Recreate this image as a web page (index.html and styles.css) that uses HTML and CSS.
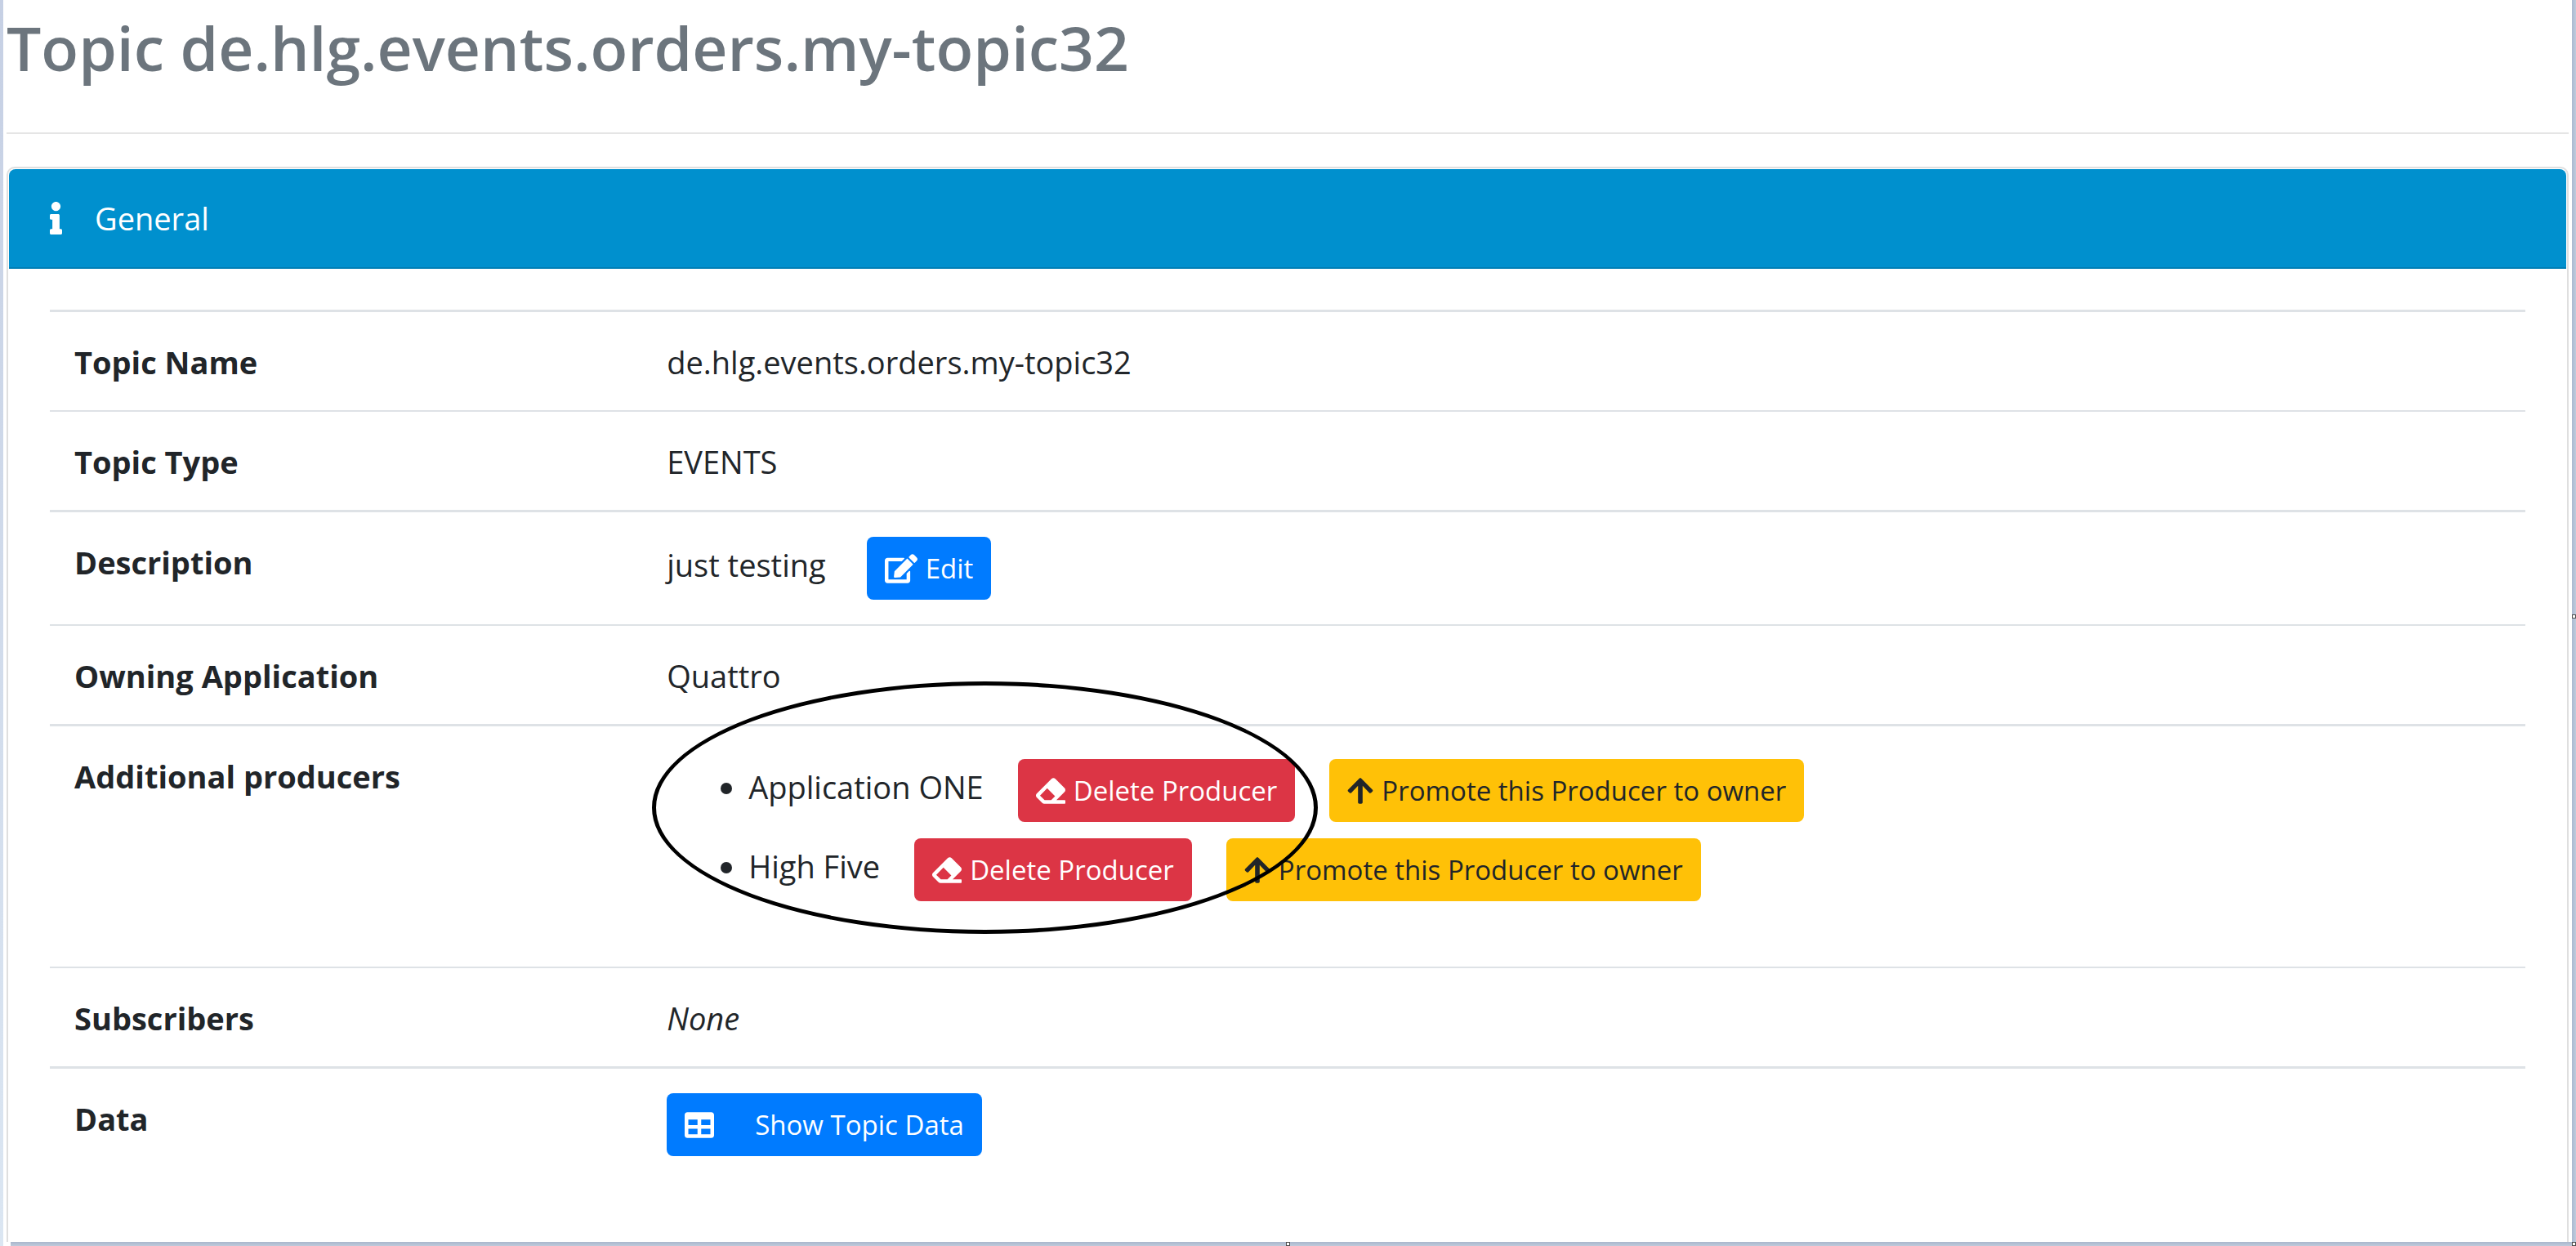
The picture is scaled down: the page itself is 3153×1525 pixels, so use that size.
FILE: index.html
```html
<!DOCTYPE html>
<html lang="en">
<head>
<meta charset="utf-8">
<title>Topic de.hlg.events.orders.my-topic32</title>
<link rel="stylesheet" href="styles.css">
</head>
<body>
<svg class="sprite" aria-hidden="true">
  <symbol id="eraser" viewBox="0 0 512 512"><path d="M497.941 273.941c18.745-18.745 18.745-49.137 0-67.882l-160-160c-18.745-18.745-49.136-18.746-67.883 0l-256 256c-18.745 18.745-18.745 49.137 0 67.882l96 96A48.004 48.004 0 0 0 144 480h356c6.627 0 12-5.373 12-12v-40c0-6.627-5.373-12-12-12H355.883l142.058-142.059zm-302.627-62.627l137.373 137.373L265.373 416H150.628l-80-80 124.686-124.686z"/></symbol>
  <symbol id="arrow-up" viewBox="0 0 448 512"><path d="M34.9 289.5l-22.2-22.2c-9.4-9.4-9.4-24.6 0-33.9L207 39c9.4-9.4 24.6-9.4 33.9 0l194.3 194.3c9.4 9.4 9.4 24.6 0 33.9L413 289.4c-9.5 9.5-25 9.3-34.3-.4L264 168.6V456c0 13.3-10.7 24-24 24h-32c-13.3 0-24-10.7-24-24V168.6L69.2 289.1c-9.3 9.8-24.8 10-34.3.4z"/></symbol>
</svg>
<div class="frame">
  <main class="page">
    <h1 class="title">Topic de.hlg.events.orders.my-topic32</h1>
    <hr class="rule">
    <section class="card">
      <header class="card-header">
        <svg class="icon-info" viewBox="0 0 192 512" aria-hidden="true"><path d="M20 424.229h20V279.771H20c-11.046 0-20-8.954-20-20V212c0-11.046 8.954-20 20-20h112c11.046 0 20 8.954 20 20v212.229h20c11.046 0 20 8.954 20 20V492c0 11.046-8.954 20-20 20H20c-11.046 0-20-8.954-20-20v-47.771c0-11.046 8.954-20 20-20zM96 0C56.235 0 24 32.235 24 72s32.235 72 72 72 72-32.235 72-72S135.764 0 96 0z"/></svg>
        <span>General</span>
      </header>
      <div class="card-body">
        <table class="details">
          <tbody>
            <tr><th scope="row">Topic Name</th><td>de.hlg.events.orders.my-topic32</td></tr>
            <tr><th scope="row">Topic Type</th><td>EVENTS</td></tr>
            <tr>
              <th scope="row">Description</th>
              <td class="actions"><span class="description">just testing</span><button type="button" class="btn btn-primary"><svg class="icon icon-wide" viewBox="0 0 576 512" aria-hidden="true"><path d="M402.6 83.2l90.2 90.2c3.8 3.8 3.8 10 0 13.8L274.4 405.6l-92.8 10.3c-12.4 1.4-22.9-9.1-21.5-21.5l10.3-92.8L388.8 83.2c3.8-3.8 10-3.8 13.8 0zm162-22.9l-48.8-48.8c-15.2-15.2-39.9-15.2-55.2 0l-35.4 35.4c-3.8 3.8-3.8 10 0 13.8l90.2 90.2c3.8 3.8 10 3.8 13.8 0l35.4-35.4c15.2-15.3 15.2-40 0-55.2zM384 346.2V448H64V128h229.8c3.2 0 6.2-1.3 8.5-3.5l40-40c7.6-7.6 1.7-20.5-8.5-20.5H48C21.5 64 0 85.5 0 112v352c0 26.5 21.5 48 48 48h352c26.5 0 48-21.5 48-48V306.2c0-10.7-12.9-16-20.5-8.5l-40 40c-2.2 2.3-3.5 5.3-3.5 8.5z"/></svg>Edit</button></td>
            </tr>
            <tr><th scope="row">Owning Application</th><td>Quattro</td></tr>
            <tr>
              <th scope="row">Additional producers</th>
              <td class="actions">
                <ul class="producers">
                  <li>Application ONE<button type="button" class="btn btn-danger"><svg class="icon" aria-hidden="true"><use href="#eraser"/></svg>Delete Producer</button><button type="button" class="btn btn-warning"><svg class="icon icon-narrow" aria-hidden="true"><use href="#arrow-up"/></svg>Promote this Producer to owner</button></li>
                  <li>High Five<button type="button" class="btn btn-danger"><svg class="icon" aria-hidden="true"><use href="#eraser"/></svg>Delete Producer</button><button type="button" class="btn btn-warning"><svg class="icon icon-narrow" aria-hidden="true"><use href="#arrow-up"/></svg>Promote this Producer to owner</button></li>
                </ul>
                <span class="highlight"></span>
              </td>
            </tr>
            <tr><th scope="row">Subscribers</th><td><em>None</em></td></tr>
            <tr>
              <th scope="row">Data</th>
              <td class="actions"><button type="button" class="btn btn-primary btn-spaced"><svg class="icon" viewBox="0 0 512 512" aria-hidden="true"><path d="M464 32H48C21.49 32 0 53.49 0 80v352c0 26.51 21.49 48 48 48h416c26.51 0 48-21.49 48-48V80c0-26.51-21.49-48-48-48zM224 416H64v-96h160v96zm0-160H64v-96h160v96zm224 160H288v-96h160v96zm0-160H288v-96h160v96z"/></svg>Show Topic Data</button></td>
            </tr>
          </tbody>
        </table>
      </div>
    </section>
  </main>
  <div class="edge-bottom"></div>
  <span class="handle handle-right"></span>
  <span class="handle handle-bottom"></span>
  <span class="handle handle-corner"></span>
</div>
</body>
</html>
```
FILE: styles.css
```css
* {
  box-sizing: border-box;
}

body {
  margin: 0;
  background: #fff;
  color: #212529;
  font-family: "Open Sans", "Noto Sans", sans-serif;
  font-size: 38px;
  line-height: 60px;
}

.sprite {
  display: none;
}

/* Window frame */
.frame {
  position: relative;
  display: flex;
  flex-direction: column;
  min-height: 100vh;
  background:
    linear-gradient(#c6d0e4, #dbe6f2) left / 4px 100% no-repeat,
    linear-gradient(90deg, #abb9d0, #bfcbdd) right / 5px 100% no-repeat,
    #fff;
}

.edge-bottom {
  height: 5px;
  margin-left: 13px;
  background: linear-gradient(#a9b6cc, #bfcadb);
}

.handle {
  position: absolute;
  width: 5px;
  height: 5px;
  border: 1px solid #4d4d4d;
  background: #fff;
}

.handle-right {
  right: 0;
  top: calc(50% - 11px);
}

.handle-bottom {
  left: calc(50% - 3px);
  bottom: 0;
}

.handle-corner {
  right: 0;
  bottom: 0;
}

/* Page */
.page {
  flex: 1;
  display: flex;
  flex-direction: column;
  padding: 10px 9px 0 8px;
}

.title {
  margin: 0;
  color: #6c757d;
  font-size: 75px;
  font-weight: 600;
  line-height: 96px;
}

.rule {
  width: 100%;
  height: 2px;
  margin: 56px 0 40px;
  border: 0;
  background: #e5e5e5;
}

.card {
  flex: 1;
  padding: 1px 1px 0;
  border: 2px solid #dfdfdf;
  border-bottom: 0;
  border-radius: 10px 10px 0 0;
}

.card-header {
  display: flex;
  align-items: center;
  gap: 40px;
  padding: 30px 50px;
  border-bottom: 2px solid #007eb5;
  border-radius: 8px 8px 0 0;
  background: #0090ce;
  color: #fff;
}

.icon-info {
  width: 15px;
  height: 40px;
  fill: currentColor;
}

.card-body {
  padding: 50px;
}

/* Details table */
.details {
  width: 100%;
  border-collapse: separate;
  border-spacing: 0;
  table-layout: fixed;
}

.details th,
.details td {
  padding: 31px 28px 29px;
  border-top: 2px solid #dee2e6;
  text-align: left;
  vertical-align: top;
}

.details tr:nth-child(odd) > * {
  border-top-width: 3px;
}

.details th {
  width: 24%;
  padding-left: 30px;
  font-weight: 700;
}

.details .actions {
  position: relative;
  padding-top: 30px;
  padding-bottom: 30px;
}

.description {
  margin-right: 50px;
}

.producers {
  margin: 0 0 40px;
  padding-left: 100px;
}

.producers .btn {
  margin: 10px 0 10px 42px;
}

.highlight {
  position: absolute;
  left: 10px;
  top: -55px;
  width: 815px;
  height: 309px;
  border: 5px solid #000;
  border-radius: 50%;
  pointer-events: none;
}

/* Buttons */
.btn {
  display: inline-flex;
  align-items: center;
  gap: 10px;
  height: 77px;
  padding: 0 22px;
  border: 0;
  border-radius: 8px;
  font: inherit;
  font-size: 33px;
  vertical-align: middle;
}

.btn-primary {
  background: #007bff;
  color: #fff;
}

.btn-danger {
  background: #dc3545;
  color: #fff;
}

.btn-warning {
  background: #ffc107;
  color: #212529;
}

.btn-spaced {
  gap: 50px;
}

.icon {
  width: 36px;
  height: 36px;
  fill: currentColor;
}

.icon-wide {
  width: 40px;
}

.icon-narrow {
  width: 32px;
}
```
